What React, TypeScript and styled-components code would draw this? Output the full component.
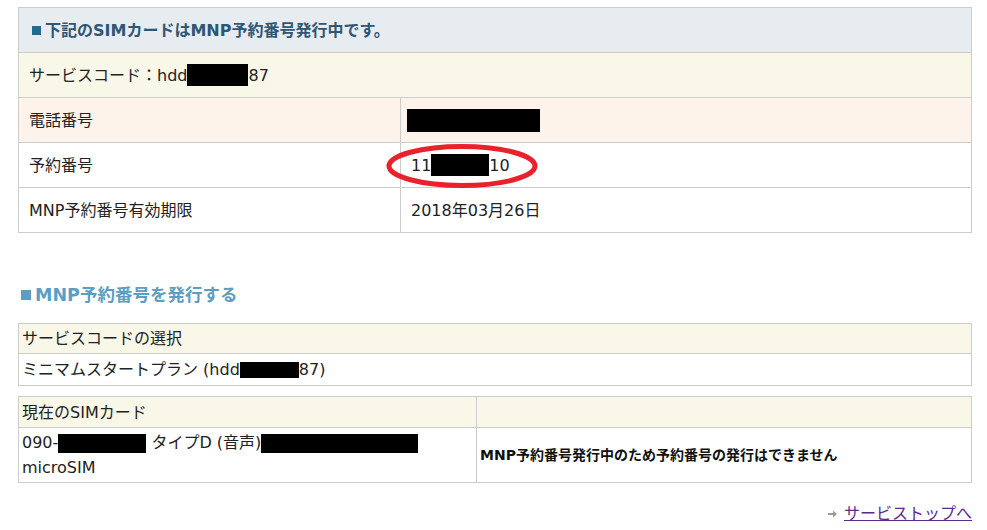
import React from "react";
import styled, { createGlobalStyle } from "styled-components";

const Global = createGlobalStyle`
  html, body { margin: 0; padding: 0; background: #fff; }
  body {
    font-family: "DejaVu Sans", "Noto Sans CJK JP", sans-serif;
    font-size: 16px;
    color: #222;
  }
`;

const Page = styled.div`
  padding: 7px 15px 0 18px;
  width: 954px;
`;

const Table = styled.div`
  position: relative;
  width: 954px;
  box-sizing: border-box;
  border-top: 1px solid #cccccc;
  border-left: 1px solid #cccccc;
  & + & { margin-top: 10px; }
`;

const Row = styled.div<{ $bg?: string; $h: number }>`
  display: flex;
  height: ${(p) => p.$h}px;
  background: ${(p) => p.$bg || "#fff"};
`;

const Cell = styled.div<{ $w?: number; $pad?: number }>`
  position: relative;
  box-sizing: border-box;
  ${(p) => (p.$w ? `width: ${p.$w}px; flex: none;` : "flex: 1;")}
  height: 100%;
  border-right: 1px solid #cccccc;
  border-bottom: 1px solid #cccccc;
  padding-left: ${(p) => p.$pad ?? 10}px;
  display: flex;
  align-items: center;
  font-size: 16px;
  line-height: 25px;
  white-space: nowrap;
`;

const MultiCell = styled(Cell)`
  flex-direction: column;
  align-items: flex-start;
  justify-content: center;
`;

const HeaderTitle = styled.div`
  display: flex;
  align-items: center;
  font-weight: bold;
  font-size: 16px;
  color: #2f5675;
  padding-left: 3px;
`;

const Square = styled.span<{ $color: string; $size: number }>`
  display: inline-block;
  width: ${(p) => p.$size}px;
  height: ${(p) => p.$size}px;
  background: ${(p) => p.$color};
  margin-right: 4px;
  flex: none;
`;

const Redact = styled.span<{ $w: number; $h: number }>`
  display: inline-block;
  width: ${(p) => p.$w}px;
  height: ${(p) => p.$h}px;
  background: #000;
  vertical-align: middle;
`;

const Ellipse = styled.svg`
  position: absolute;
  left: -17px;
  top: 1px;
  pointer-events: none;
`;

const SectionHeading = styled.h2`
  margin: 0;
  height: 90px;
  box-sizing: border-box;
  padding: 50px 0 0 3px;
  display: flex;
  align-items: center;
  align-content: flex-start;
  font-size: 17.5px;
  font-weight: bold;
  color: #5c9ec3;
  line-height: 24px;
  & > span.text { display: block; }
`;

const HeadingLine = styled.div`
  display: flex;
  align-items: center;
  height: 24px;
  align-self: flex-start;
`;

const Note = styled.span`
  font-weight: bold;
  font-size: 14px;
  color: #111;
`;

const LinkRow = styled.div`
  display: flex;
  justify-content: flex-end;
  align-items: center;
  margin-top: 19px;
  height: 24px;
`;

const Arrow = styled.svg`
  margin-right: 7px;
`;

const Link = styled.a`
  color: #5a2a8e;
  text-decoration: underline;
  font-size: 16px;
  line-height: 24px;
`;

export default function App() {
  return (
    <>
      <Global />
      <Page>
        <Table>
          <Row $h={45} $bg="#e6ecef">
            <Cell $pad={10}>
              <HeaderTitle>
                <Square $color="#1e6b94" $size={9} />
                下記のSIMカードはMNP予約番号発行中です。
              </HeaderTitle>
            </Cell>
          </Row>
          <Row $h={45} $bg="#f9f8e8">
            <Cell>
              サービスコード：hdd<Redact $w={61} $h={22} />87
            </Cell>
          </Row>
          <Row $h={45} $bg="#fdf3ea">
            <Cell $w={382}>電話番号</Cell>
            <Cell $pad={6}>
              <Redact $w={133} $h={23} />
            </Cell>
          </Row>
          <Row $h={45}>
            <Cell $w={382}>予約番号</Cell>
            <Cell>
              11<Redact $w={58} $h={22} />10
              <Ellipse width="156" height="44" viewBox="0 0 156 44">
                <ellipse cx="78" cy="22" rx="73" ry="19.5" fill="none" stroke="#e8212b" strokeWidth="5" />
              </Ellipse>
            </Cell>
          </Row>
          <Row $h={45}>
            <Cell $w={382}>MNP予約番号有効期限</Cell>
            <Cell>2018年03月26日</Cell>
          </Row>
        </Table>

        <SectionHeading>
          <HeadingLine>
            <Square $color="#5c9ec3" $size={10} />
            MNP予約番号を発行する
          </HeadingLine>
        </SectionHeading>

        <Table>
          <Row $h={30} $bg="#f9f8e8">
            <Cell $pad={3}>サービスコードの選択</Cell>
          </Row>
          <Row $h={32}>
            <Cell $pad={3}>
              ミニマムスタートプラン (hdd<Redact $w={59} $h={16} />87)
            </Cell>
          </Row>
        </Table>
        <Table>
          <Row $h={31} $bg="#f9f8e8">
            <Cell $w={458} $pad={3}>現在のSIMカード</Cell>
            <Cell $pad={3}></Cell>
          </Row>
          <Row $h={55}>
            <MultiCell $w={458} $pad={3}>
              <div>
                090-<Redact $w={88} $h={19} /> タイプD (音声)<Redact $w={157} $h={19} />
              </div>
              <div>microSIM</div>
            </MultiCell>
            <Cell $pad={3}>
              <Note>MNP予約番号発行中のため予約番号の発行はできません</Note>
            </Cell>
          </Row>
        </Table>

        <LinkRow>
          <Arrow width="9" height="8" viewBox="0 0 9 8">
            <path d="M0 3h5V0.5L9 4 5 7.5V5H0z" fill="#9a9a9a" />
          </Arrow>
          <Link href="#">サービストップへ</Link>
        </LinkRow>
      </Page>
    </>
  );
}
